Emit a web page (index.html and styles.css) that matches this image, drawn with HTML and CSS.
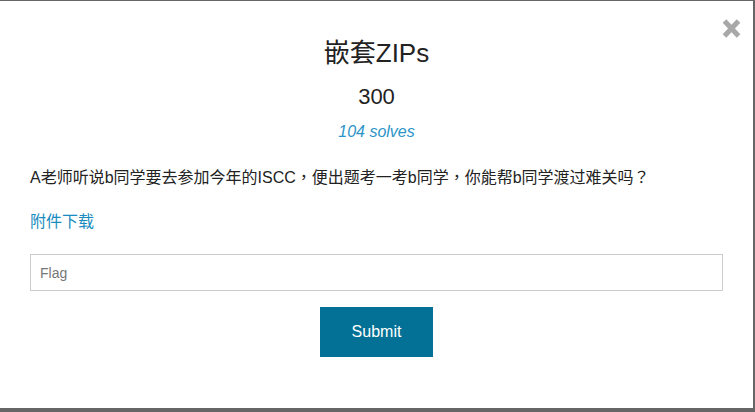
FILE: index.html
```html
<!DOCTYPE html>
<html lang="zh">
<head>
<meta charset="utf-8">
<title>嵌套ZIPs</title>
<link rel="stylesheet" href="styles.css">
</head>
<body>
<div class="modal">
  <button class="close" aria-label="close">
    <svg width="19" height="21" viewBox="0 0 19 21"><path d="M2.5 3 L16.5 18 M16.5 3 L2.5 18" stroke="#a8a8a8" stroke-width="5" stroke-linecap="butt"/></svg>
  </button>
  <h3 class="title">嵌套ZIPs</h3>
  <div class="value">300</div>
  <div class="solves">104 solves</div>
  <p class="desc" lang="zh-TW">A老师听说b同学要去参加今年的ISCC，便出题考一考b同学，你能帮b同学渡过难关吗？</p>
  <a class="file" href="#">附件下载</a>
  <input class="flag" type="text" placeholder="Flag">
  <div class="actions"><button class="submit">Submit</button></div>
</div>
</body>
</html>
```

FILE: styles.css
```css
html, body {
  margin: 0;
  padding: 0;
  background: #666666;
  height: 100%;
}
body {
  font-family: "Liberation Sans", Arial, "Noto Sans CJK SC", sans-serif;
  color: #222222;
  overflow: hidden;
}
.modal {
  position: relative;
  margin-top: 1px;
  width: 753px;
  height: 407px;
  background: #ffffff;
  box-sizing: border-box;
  padding: 37px 30px 0 30px;
  display: flex;
  flex-direction: column;
}
.close {
  position: absolute;
  top: 17px;
  right: 12px;
  padding: 0;
  border: 0;
  background: none;
  width: 19px;
  height: 21px;
  line-height: 0;
}
.title {
  margin: 0;
  font-weight: normal;
  font-size: 26px;
  line-height: 30px;
  text-align: center;
}
.value {
  margin-top: 16px;
  font-size: 22px;
  line-height: 26px;
  text-align: center;
}
.solves {
  margin-top: 12px;
  font-size: 16px;
  line-height: 20px;
  font-style: italic;
  color: #2b94c8;
  text-align: center;
}
.desc {
  margin: 26px 0 0 0;
  font-family: "Liberation Sans", Arial, "Noto Sans CJK TC", sans-serif;
  font-size: 16px;
  line-height: 20px;
}
.file {
  margin-top: 24px;
  font-size: 16px;
  line-height: 20px;
  color: #1a8cc0;
  text-decoration: none;
  align-self: flex-start;
}
.flag {
  margin-top: 22px;
  width: 693px;
  height: 37px;
  box-sizing: border-box;
  border: 1px solid #cccccc;
  padding: 0 9px;
  font-family: "Liberation Sans", Arial, sans-serif;
  font-size: 14px;
  outline: none;
}
.flag::placeholder {
  color: #777777;
}
.actions {
  margin-top: 16px;
  display: flex;
  justify-content: center;
}
.submit {
  width: 113px;
  height: 50px;
  border: 0;
  background: #037195;
  color: #ffffff;
  font-family: "Liberation Sans", Arial, sans-serif;
  font-size: 16px;
  padding: 0;
}
```
